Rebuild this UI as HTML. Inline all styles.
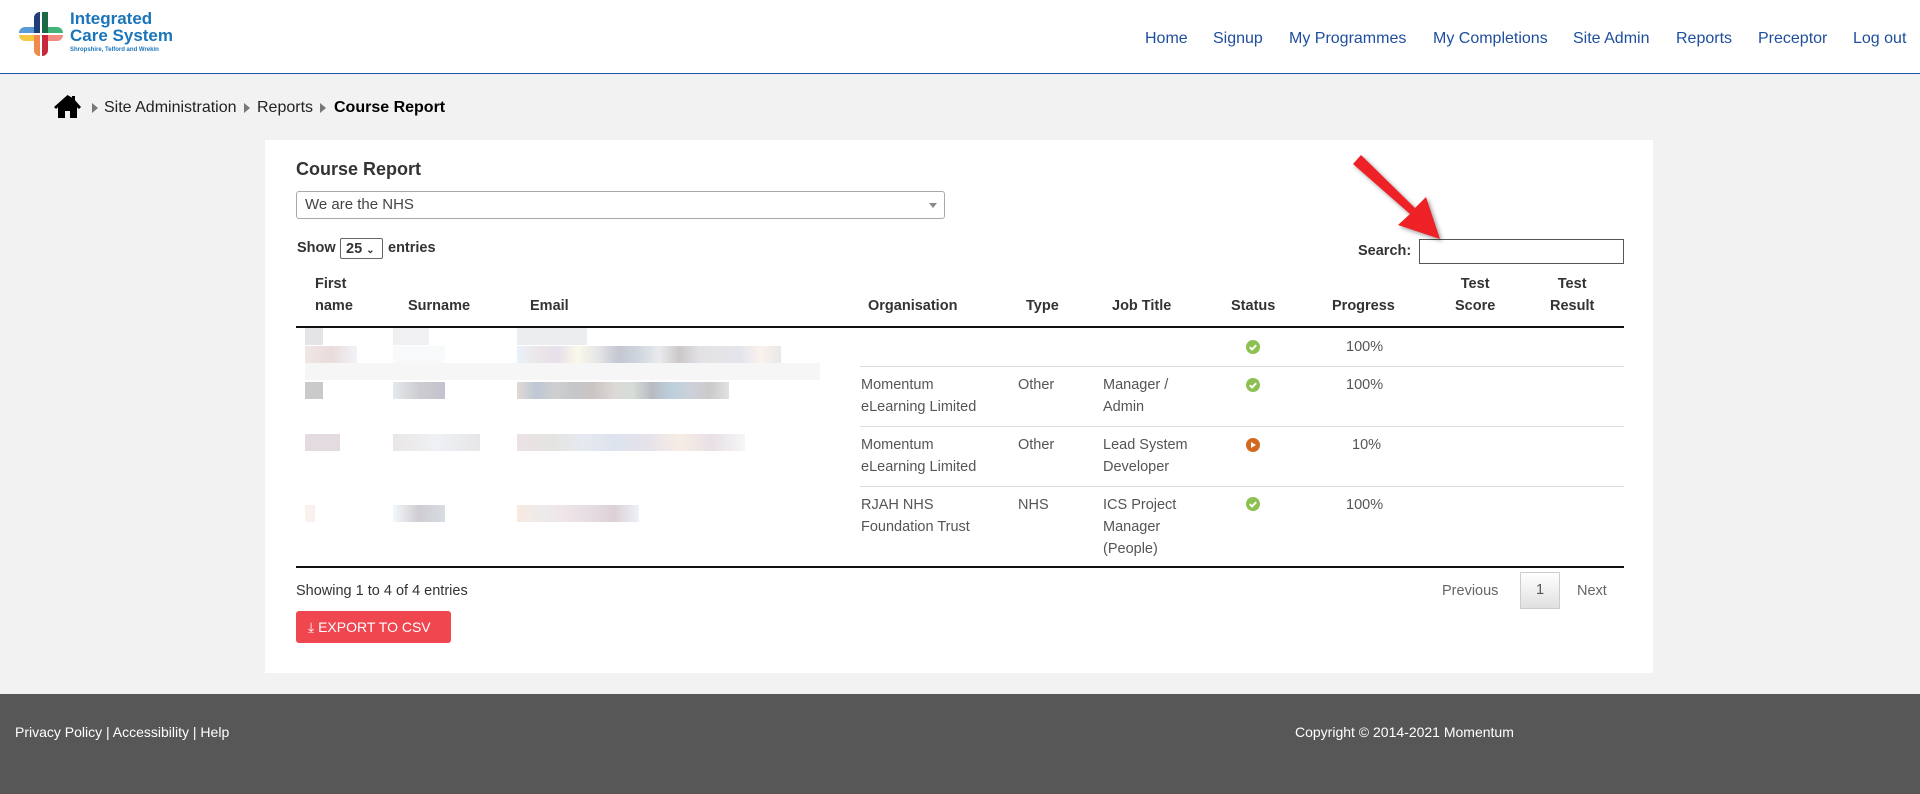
<!DOCTYPE html>
<html><head><meta charset="utf-8"><style>
*{margin:0;padding:0;box-sizing:border-box}
body{width:1920px;height:794px;background:#f2f2f2;font-family:"Liberation Sans",Arial,sans-serif;position:relative;overflow:hidden;color:#333}
.a{position:absolute;white-space:nowrap}
.hdr{position:absolute;left:0;top:0;width:1920px;height:74px;background:#fff;border-bottom:1.5px solid #1a56a8}
.nav{font-size:16px;color:#1f4e9c;top:30px}
.card{position:absolute;left:265px;top:140px;width:1388px;height:533px;background:#fff}
.th{font-size:14.5px;font-weight:bold;color:#333;line-height:22px}
.td{font-size:14.5px;color:#555;line-height:22px}
.line{position:absolute;left:296px;width:1328px;height:1px;background:#ddd}
.blk{position:absolute;height:17px}
.foot{position:absolute;left:0;top:694px;width:1920px;height:100px;background:#575757}
</style></head><body>
<div class="hdr"></div>
<svg class="a" style="left:19px;top:12px" width="44" height="44" viewBox="0 0 44 44">
<defs><clipPath id="c"><path d="M15 0h14a0 0 0 0 1 0 0v15h9a6 6 0 0 1 6 6v2a6 6 0 0 1-6 6h-9v9a6 6 0 0 1-6 6h-2a6 6 0 0 1-6-6v-9H6a6 6 0 0 1-6-6v-2a6 6 0 0 1 6-6h9V6a6 6 0 0 1 6-6z"/></clipPath></defs>
<g clip-path="url(#c)">
<rect x="0" y="0" width="22" height="22" fill="#5b9bd5"/>
<rect x="15" y="0" width="7" height="22" fill="#1f3f7a"/>
<rect x="22" y="0" width="22" height="22" fill="#3fb37a"/>
<rect x="22" y="0" width="7" height="22" fill="#1a6b45"/>
<rect x="0" y="22" width="22" height="22" fill="#f5c842"/>
<rect x="15" y="22" width="7" height="22" fill="#f08a4b"/>
<rect x="8" y="29" width="14" height="15" fill="#f08a4b"/>
<rect x="22" y="22" width="22" height="22" fill="#f28b82"/>
<rect x="22" y="22" width="7" height="22" fill="#c8283e"/>
<rect x="21" y="0" width="2" height="44" fill="#fff"/>
<rect x="0" y="21" width="44" height="2" fill="#fff"/>
</g>
</svg>
<div class="a" style="left:70px;top:10px;font-size:17px;font-weight:bold;color:#1b75bb;line-height:17px">Integrated<br>Care System</div>
<div class="a" style="left:70px;top:47px;font-size:6px;font-weight:bold;color:#1b75bb">Shropshire, Telford and Wrekin</div>
<div class="a nav" style="left:1145px">Home</div>
<div class="a nav" style="left:1213px">Signup</div>
<div class="a nav" style="left:1289px">My Programmes</div>
<div class="a nav" style="left:1433px">My Completions</div>
<div class="a nav" style="left:1573px">Site Admin</div>
<div class="a nav" style="left:1676px">Reports</div>
<div class="a nav" style="left:1758px">Preceptor</div>
<div class="a nav" style="left:1853px">Log out</div>

<svg class="a" style="left:53px;top:94px" width="29" height="24" viewBox="0 0 29 24"><path d="M14.5 1L1 13l2 2 2-1.8V24h7v-7h5v7h7V13.2l2 1.8 2-2L22 6.3V2h-3v1.6z" fill="#000"/></svg>
<div class="a" style="left:92px;top:103px;width:0;height:0;border-left:6px solid #777;border-top:5px solid transparent;border-bottom:5px solid transparent"></div>
<div class="a" style="left:104px;top:99px;font-size:16px;color:#222">Site Administration</div>
<div class="a" style="left:244px;top:103px;width:0;height:0;border-left:6px solid #777;border-top:5px solid transparent;border-bottom:5px solid transparent"></div>
<div class="a" style="left:257px;top:99px;font-size:16px;color:#222">Reports</div>
<div class="a" style="left:320px;top:103px;width:0;height:0;border-left:6px solid #777;border-top:5px solid transparent;border-bottom:5px solid transparent"></div>
<div class="a" style="left:334px;top:99px;font-size:16px;color:#000;font-weight:bold">Course Report</div>

<div class="card"></div>
<div class="a" style="left:296px;top:159px;font-size:18px;font-weight:bold;color:#333">Course Report</div>
<div class="a" style="left:296px;top:191px;width:649px;height:28px;border:1px solid #aaa;border-radius:3px;background:#fff"></div>
<div class="a" style="left:305px;top:196px;font-size:15px;color:#444">We are the NHS</div>
<div class="a" style="left:929px;top:203px;width:0;height:0;border-top:5px solid #888;border-left:4px solid transparent;border-right:4px solid transparent"></div>

<div class="a" style="left:297px;top:240px;font-size:14.5px;font-weight:bold">Show</div>
<div class="a" style="left:340px;top:238px;width:43px;height:21px;border:1px solid #666;border-radius:2px;font-size:14.5px;padding:2px 0 0 5px;font-weight:bold">25 <span style="font-size:10px">&#8964;</span></div>
<div class="a" style="left:388px;top:240px;font-size:14.5px;font-weight:bold">entries</div>
<div class="a" style="left:1358px;top:243px;font-size:14.5px;font-weight:bold">Search:</div>
<div class="a" style="left:1419px;top:239px;width:205px;height:25px;border:1px solid #555"></div>

<div class="a th" style="left:315px;top:273px">First<br>name</div>
<div class="a th" style="left:408px;top:295px">Surname</div>
<div class="a th" style="left:530px;top:295px">Email</div>
<div class="a th" style="left:868px;top:295px">Organisation</div>
<div class="a th" style="left:1026px;top:295px">Type</div>
<div class="a th" style="left:1112px;top:295px">Job Title</div>
<div class="a th" style="left:1231px;top:295px">Status</div>
<div class="a th" style="left:1332px;top:295px">Progress</div>
<div class="a th" style="left:1455px;top:273px;text-align:center">Test<br>Score</div>
<div class="a th" style="left:1550px;top:273px;text-align:center">Test<br>Result</div>
<div class="line" style="top:326px;height:2px;background:#111"></div>

<div class="blk" style="left:305px;top:328px;width:18px;background:#e4e4e6"></div>
<div class="blk" style="left:305px;top:346px;width:52px;background:linear-gradient(90deg,#efe8e6,#e9dbdb,#f2f3f8)"></div>
<div class="blk" style="left:393px;top:328px;width:36px;background:#f0f0f2"></div>
<div class="blk" style="left:393px;top:346px;width:52px;background:#f7f9fb"></div>
<div class="blk" style="left:517px;top:328px;width:70px;background:#ecedef"></div>
<div class="blk" style="left:517px;top:346px;width:264px;background:linear-gradient(90deg,#e9f1f9,#ebe6e8,#e5e0ea,#fbf8ea,#e4e5e6,#c4c6d2,#cfd6de,#e9ebee,#cdc8c8,#e2e1e6,#e5e4e6,#e3e5ed,#fbf2ec,#e8e8e9)"></div>
<div class="a" style="left:305px;top:363px;width:515px;height:17px;background:#f6f6f6"></div>
<div class="line" style="top:366px;left:860px;width:764px"></div>
<div class="blk" style="left:305px;top:382px;width:18px;background:#cacaca"></div>
<div class="blk" style="left:393px;top:382px;width:52px;background:linear-gradient(90deg,#e4e9ec,#cdcdd0,#c3c2ce)"></div>
<div class="blk" style="left:517px;top:382px;width:212px;background:linear-gradient(90deg,#e1d9d5,#bec7d5,#cfcfd0,#c4c6c8,#cbc5c3,#dcd8d6,#d6ddd6,#b8bac3,#bccfdc,#cdd1da,#cbcacb,#e2e0e2)"></div>
<div class="line" style="top:426px;left:860px;width:764px"></div>
<div class="blk" style="left:305px;top:434px;width:35px;background:#e3dbdf"></div>
<div class="blk" style="left:393px;top:434px;width:87px;background:linear-gradient(90deg,#eae6e6,#eef1f4,#e6e6e8)"></div>
<div class="blk" style="left:517px;top:434px;width:228px;background:linear-gradient(90deg,#ece2e5,#e4e4e0,#e6e9f0,#dde3ee,#e6e2ea,#f7ede6,#e8e0e6,#f6f6f8)"></div>
<div class="line" style="top:486px;left:860px;width:764px"></div>
<div class="blk" style="left:305px;top:505px;width:10px;background:#f8f1ee"></div>
<div class="blk" style="left:393px;top:505px;width:52px;background:linear-gradient(90deg,#f3f7fb,#cfcdd2,#d6dde3)"></div>
<div class="blk" style="left:517px;top:505px;width:122px;background:linear-gradient(90deg,#f9e9e0,#ecebea,#efe5e8,#e5dde2,#dcd0d6,#eef2f8)"></div>

<div class="a td" style="left:861px;top:374px">Momentum<br>eLearning Limited</div>
<div class="a td" style="left:1018px;top:374px">Other</div>
<div class="a td" style="left:1103px;top:374px">Manager /<br>Admin</div>
<div class="a td" style="left:861px;top:434px">Momentum<br>eLearning Limited</div>
<div class="a td" style="left:1018px;top:434px">Other</div>
<div class="a td" style="left:1103px;top:434px">Lead System<br>Developer</div>
<div class="a td" style="left:861px;top:494px">RJAH NHS<br>Foundation Trust</div>
<div class="a td" style="left:1018px;top:494px">NHS</div>
<div class="a td" style="left:1103px;top:494px">ICS Project<br>Manager<br>(People)</div>

<svg class="a" style="left:1246px;top:340px" width="14" height="14" viewBox="0 0 14 14"><circle cx="7" cy="7" r="7" fill="#8cc152"/><path d="M3.8 7.2l2.2 2.2 4.2-4.2" stroke="#fff" stroke-width="2" fill="none"/></svg>
<svg class="a" style="left:1246px;top:378px" width="14" height="14" viewBox="0 0 14 14"><circle cx="7" cy="7" r="7" fill="#8cc152"/><path d="M3.8 7.2l2.2 2.2 4.2-4.2" stroke="#fff" stroke-width="2" fill="none"/></svg>
<svg class="a" style="left:1246px;top:438px" width="14" height="14" viewBox="0 0 14 14"><circle cx="7" cy="7" r="7" fill="#d2691e"/><path d="M5 4l5 3-5 3z" fill="#fff"/></svg>
<svg class="a" style="left:1246px;top:497px" width="14" height="14" viewBox="0 0 14 14"><circle cx="7" cy="7" r="7" fill="#8cc152"/><path d="M3.8 7.2l2.2 2.2 4.2-4.2" stroke="#fff" stroke-width="2" fill="none"/></svg>
<div class="a td" style="left:1346px;top:336px">100%</div>
<div class="a td" style="left:1346px;top:374px">100%</div>
<div class="a td" style="left:1352px;top:434px">10%</div>
<div class="a td" style="left:1346px;top:494px">100%</div>
<div class="line" style="top:566px;height:2px;background:#111"></div>

<div class="a td" style="left:296px;top:580px;color:#333">Showing 1 to 4 of 4 entries</div>
<div class="a td" style="left:1442px;top:580px;color:#666">Previous</div>
<div class="a" style="left:1520px;top:572px;width:40px;height:37px;border:1px solid #ccc;background:linear-gradient(#fff,#e0e0e0);font-size:14.5px;color:#555;text-align:center;line-height:35px">1</div>
<div class="a td" style="left:1577px;top:580px;color:#666">Next</div>
<div class="a" style="left:296px;top:611px;width:155px;height:32px;background:#ef4650;border-radius:3px;color:#fff;font-size:14px;line-height:32px;padding-left:12px">&#10515; EXPORT TO CSV</div>

<svg class="a" style="left:1340px;top:150px" width="110" height="100" viewBox="0 0 110 100"><path d="M13 14L70 64l-12 11 42 14-14-42-11 11L21 5z" fill="#ee2226" style="filter:drop-shadow(2px 2px 2px rgba(0,0,0,.4))"/></svg>

<div class="foot"></div>
<div class="a" style="left:15px;top:724px;font-size:14px;color:#fff">Privacy Policy | Accessibility | Help</div>
<div class="a" style="left:1295px;top:724px;font-size:14px;color:#fff">Copyright © 2014-2021 Momentum</div>
</body></html>
